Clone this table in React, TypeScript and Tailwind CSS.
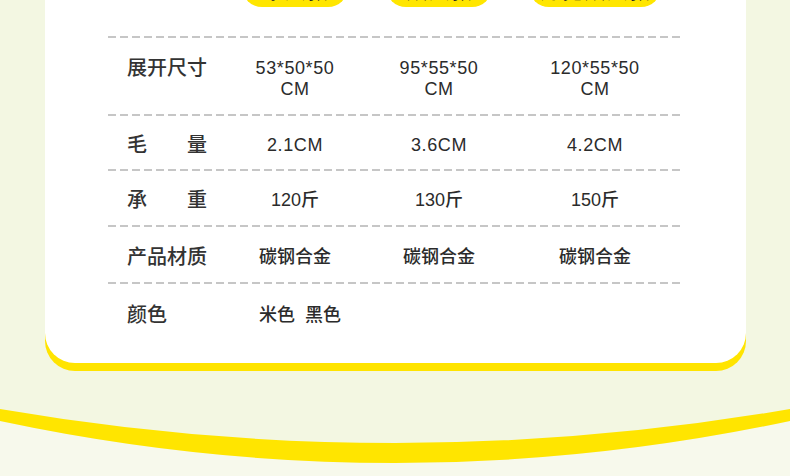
import React from "react";

const cols = "grid grid-cols-[103px_130px_158px_154px] pl-[19px]";
const font = { fontFamily: '"Liberation Sans", "Noto Sans CJK SC", sans-serif' };

function Dash() {
  return (
    <div className="h-[2px] w-[573px] bg-[repeating-linear-gradient(90deg,#c6c6c6_0px,#c6c6c6_8px,transparent_8px,transparent_12px)]" />
  );
}

function Label({ children }: { children: React.ReactNode }) {
  return <div className="text-[20px] leading-[21px] text-[#333] font-medium">{children}</div>;
}

function Spread({ a, b }: { a: string; b: string }) {
  return (
    <div className="flex w-[80px] justify-between text-[20px] leading-[21px] text-[#333] font-medium">
      <span>{a}</span>
      <span>{b}</span>
    </div>
  );
}

function V({ children, extra = "" }: { children: React.ReactNode; extra?: string }) {
  return (
    <div className={`text-center text-[18px] leading-[21px] text-[#2b2b2b] font-medium tracking-[0.6px] ${extra}`}>
      {children}
    </div>
  );
}

function Pill({ w, children }: { w: string; children: React.ReactNode }) {
  return (
    <div className="flex justify-center">
      <div className={`${w} h-[40px] rounded-full bg-[#ffe600] flex items-end justify-center pb-[5px] text-[22px] leading-[22px] text-[#222] font-bold`}>
        {children}
      </div>
    </div>
  );
}

export default function App() {
  return (
    <div className="w-[790px] h-[476px] overflow-hidden bg-[#f3f7e2]" style={font}>
      <div className="ml-[45px] w-[701px] h-[363px] bg-white rounded-b-[30px] shadow-[0_8px_0_#ffe400] flex flex-col pl-[63px]">
        <div className={`${cols} -mt-[33px] h-[40px]`}>
          <div />
          <Pill w="w-[106px]">单人款</Pill>
          <Pill w="w-[106px]">双人款</Pill>
          <Pill w="w-[132px]">加宽双人款</Pill>
        </div>
        <div className="mt-[29px]">
          <Dash />
        </div>
        <div className={`${cols} h-[76px] items-start pt-[20px]`}>
          <Label>展开尺寸</Label>
          <V>53*50*50<br />CM</V>
          <V>95*55*50<br />CM</V>
          <V>120*55*50<br />CM</V>
        </div>
        <Dash />
        <div className={`${cols} h-[53px] items-center pt-[5px]`}>
          <Spread a="毛" b="量" />
          <V>2.1CM</V>
          <V>3.6CM</V>
          <V>4.2CM</V>
        </div>
        <Dash />
        <div className={`${cols} h-[54px] items-center pt-[5px]`}>
          <Spread a="承" b="重" />
          <V extra="tracking-[0px]">120斤</V>
          <V extra="tracking-[0px]">130斤</V>
          <V extra="tracking-[0px]">150斤</V>
        </div>
        <Dash />
        <div className={`${cols} h-[55px] items-center pt-[5px]`}>
          <Label>产品材质</Label>
          <V extra="tracking-[0px]">碳钢合金</V>
          <V extra="tracking-[0px]">碳钢合金</V>
          <V extra="tracking-[0px]">碳钢合金</V>
        </div>
        <Dash />
        <div className={`${cols} items-start pt-[21px]`}>
          <Label>颜色</Label>
          <div className="pl-[29px] text-[18px] leading-[21px] text-[#2b2b2b] font-medium whitespace-nowrap">米色&nbsp;&nbsp;黑色</div>
        </div>
      </div>
      <svg width="790" height="113" viewBox="0 363 790 113" className="block">
        <path d="M0 421 Q395 505 790 421 L790 476 L0 476 Z" fill="#f7f9ec" />
        <path d="M0 409 Q395 477 790 409 L790 421 Q395 505 0 421 Z" fill="#ffe500" />
      </svg>
    </div>
  );
}
